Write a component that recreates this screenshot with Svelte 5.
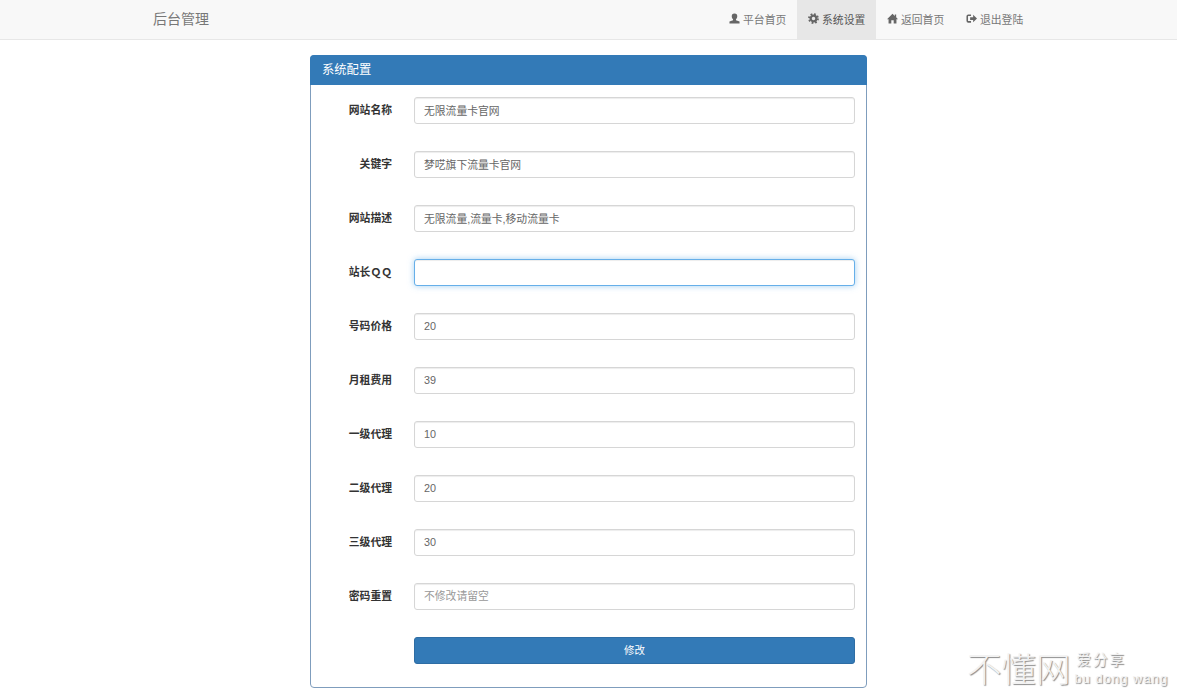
<script>
	const navItems = [
		{ key: 'user', label: '平台首页' },
		{ key: 'cog', label: '系统设置', active: true },
		{ key: 'home', label: '返回首页' },
		{ key: 'logout', label: '退出登陆' }
	];

	const fields = [
		{ label: '网站名称', value: '无限流量卡官网' },
		{ label: '关键字', value: '梦呓旗下流量卡官网' },
		{ label: '网站描述', value: '无限流量,流量卡,移动流量卡' },
		{ label: '站长ＱＱ', value: '', focus: true },
		{ label: '号码价格', value: '20' },
		{ label: '月租费用', value: '39' },
		{ label: '一级代理', value: '10' },
		{ label: '二级代理', value: '20' },
		{ label: '三级代理', value: '30' },
		{ label: '密码重置', value: '', placeholder: '不修改请留空' }
	];
</script>

<header class="navbar">
	<span class="brand">后台管理</span>
	<nav class="nav">
		{#each navItems as item}
			<a class="nav-item" class:active={item.active} href="#top">
				<svg class="icon" viewBox="0 0 12 12" aria-hidden="true">
					{#if item.key === 'user'}
						<path d="M6 .5a3 3.100 0 0 1 3 3.300c0 1.300-.6 2.400-1.400 3v1l3.900 1.600v2.100H.5V9.400l3.900-1.600v-1C3.600 6.200 3 5.100 3 3.800A3 3.100 0 0 1 6 .5z" />
					{:else if item.key === 'cog'}
						<circle cx="6" cy="6" r="3.100" class="ring" />
						<circle cx="6" cy="6" r="4.900" class="teeth" />
					{:else if item.key === 'home'}
						<path d="M6 .8 8.500 3.200V1.600H10V4.600L12 6.700H10.300V11.500H7.300V7.900H4.700V11.500H1.700V6.700H0z" />
					{:else}
						<path d="M5.500 1.500H2.500A2 2 0 0 0 .5 3.500v5a2 2 0 0 0 2 2h3V8.800h-3a.3.3 0 0 1-.3-.3v-5a.3.3 0 0 1 .3-.3h3zM4.500 4.500h3.300V2L12 6 7.800 10V7.500H4.500z" />
					{/if}
				</svg>
				<span class="nav-label">{item.label}</span>
			</a>
		{/each}
	</nav>
</header>

<main class="panel">
	<div class="panel-heading">系统配置</div>
	<form class="panel-body">
		{#each fields as field}
			<label class="row">
				<span class="label">{field.label}</span>
				<input
					class="control"
					class:focus={field.focus}
					type="text"
					value={field.value}
					placeholder={field.placeholder}
				/>
			</label>
		{/each}
		<div class="row">
			<span></span>
			<button class="submit" type="button">修改</button>
		</div>
	</form>
</main>

<div class="watermark">
	<span class="wm-big">不懂网</span>
	<span class="wm-side">
		<span class="wm-cn">爱分享</span>
		<span class="wm-en">bu dong wang</span>
	</span>
</div>

<style>
	:global(body) {
		font-family: "Liberation Sans", "Noto Sans CJK SC", sans-serif;
		font-size: 10.800px;
		color: #333;
		background: #fff;
	}

	.navbar {
		display: flex;
		justify-content: space-between;
		height: 39px;
		padding: 0 143px 0 153px;
		background: #f8f8f8;
		border-bottom: 1px solid #e7e7e7;
	}

	.brand {
		padding-bottom: 1px;
		font-size: 14px;
		line-height: 38px;
		color: #777;
	}

	.nav {
		display: flex;
	}

	.nav-item {
		display: flex;
		align-items: center;
		gap: 3px;
		padding: 0 10.800px 0 11px;
		color: #777;
		text-decoration: none;
	}

	.nav-label {
		padding-bottom: 1px;
	}

	.nav-item.active {
		background: #e7e7e7;
		color: #555;
	}

	.icon {
		width: 11px;
		height: 11px;
		padding-bottom: 2px;
		fill: #666;
	}

	.ring {
		fill: none;
		stroke: #666;
		stroke-width: 2.400;
	}

	.teeth {
		fill: none;
		stroke: #666;
		stroke-width: 2;
		stroke-dasharray: 1.920 1.930;
	}

	.panel {
		box-sizing: border-box;
		width: 557px;
		height: 633px;
		margin: 15px 0 0 310px;
		border: 1px solid #7f9dbd;
		border-radius: 4px;
		background: #fff;
	}

	.panel-heading {
		height: 30px;
		margin: -1px -1px 0;
		padding-left: 12px;
		font-size: 12.300px;
		line-height: 31px;
		color: #fff;
		background: #337ab7;
		border-radius: 4px 4px 0 0;
	}

	.panel-body {
		display: flex;
		flex-direction: column;
		gap: 27px;
		padding: 12px 11px 0 0;
	}

	.row {
		display: grid;
		grid-template-columns: 81px 1fr;
		column-gap: 22px;
		align-items: center;
	}

	.label {
		padding-bottom: 3px;
		font-weight: 700;
		text-align: right;
		color: #333;
	}

	.control {
		box-sizing: border-box;
		width: 100%;
		height: 27px;
		padding: 0 9px 2px;
		font: inherit;
		color: #666;
		background: #fff;
		border: 1px solid #d6d6d6;
		border-radius: 3px;
		box-shadow: inset 0 1px 1px rgba(0, 0, 0, 0.075);
		outline: none;
	}

	.control::placeholder {
		color: #999;
	}

	.control.focus {
		border-color: #66afe9;
		box-shadow: inset 0 1px 1px rgba(0, 0, 0, 0.075), 0 0 6px rgba(102, 175, 233, 0.6);
	}

	.submit {
		height: 27px;
		padding: 0 0 2px;
		font: inherit;
		font-size: 10.500px;
		color: #fff;
		background: #337ab7;
		border: 1px solid #2e6da4;
		border-radius: 3px;
	}

	.watermark {
		position: absolute;
		left: 967px;
		top: 643px;
		display: flex;
		gap: 4px;
		color: #f2f2f2;
		text-shadow: 1px 1px 1px #8a8a8a;
	}

	.wm-big {
		font-family: "Noto Sans CJK SC", sans-serif;
		font-size: 34.500px;
		font-weight: 300;
		line-height: 48px;
	}

	.wm-side {
		display: flex;
		flex-direction: column;
		padding-top: 8px;
	}

	.wm-cn {
		padding-left: 2px;
		font-size: 14.500px;
		line-height: 18px;
		letter-spacing: 2px;
	}

	.wm-en {
		font-size: 13px;
		line-height: 19px;
		letter-spacing: 1px;
	}
</style>
